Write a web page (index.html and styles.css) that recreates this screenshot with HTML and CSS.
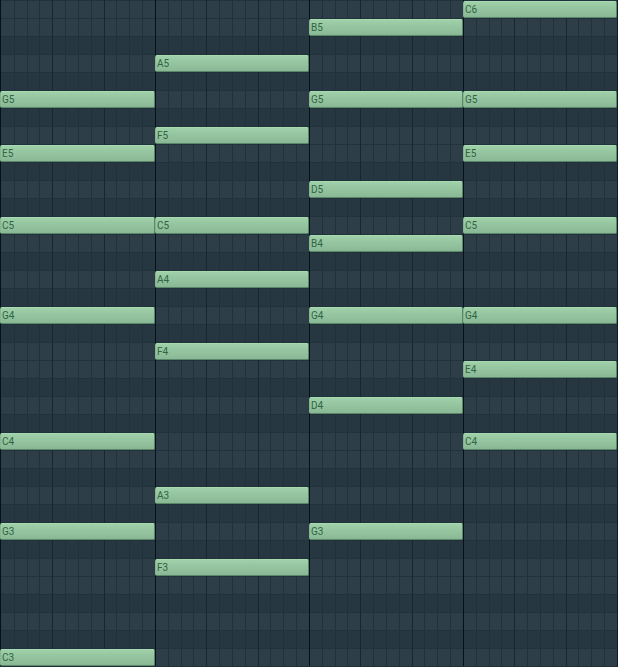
FILE: index.html
```
<!DOCTYPE html>
<html lang="en">
<head>
<meta charset="utf-8">
<title>Piano roll</title>
<link rel="stylesheet" href="styles.css">
</head>
<body>
<main class="roll" aria-label="Piano roll">
  <div class="steps" aria-hidden="true"></div>
  <div class="notes"></div>
</main>
<script src="roll.js"></script>
</body>
</html>
```
FILE: styles.css
```
body {
  margin: 0;
  background: #0e1c26;
  font-family: Roboto, "Liberation Sans", sans-serif;
}

.roll {
  --row: 18px;
  --white: #2e3e48;
  --black: #273741;
  display: grid;
  padding: 0 1px;
  /* One octave of key lanes, from C down to C sharp */
  background:
    repeating-linear-gradient(#22323c 0 1px, transparent 1px var(--row)),
    repeating-linear-gradient(
      var(--white) 0 36px,
      var(--black) 36px 54px,
      var(--white) 54px 72px,
      var(--black) 72px 90px,
      var(--white) 90px 108px,
      var(--black) 108px 126px,
      var(--white) 126px 162px,
      var(--black) 162px 180px,
      var(--white) 180px 198px,
      var(--black) 198px 216px);
  background-clip: content-box;
  border-bottom: 1px solid #20303a;
}

.steps,
.notes {
  grid-area: 1 / 1;
  display: grid;
  grid-template-columns: repeat(48, minmax(0, 1fr));
}

.notes {
  grid-template-rows: repeat(37, var(--row));
}

.step {
  border-left: 1px solid #21313b;
}

.step.beat {
  border-left-color: #172630;
}

.step.bar {
  border-left-color: #03111b;
}

/* The first bar starts in the left gutter */
.step.bar:first-child,
.note.opening {
  margin-left: -1px;
}

.note {
  box-sizing: border-box;
  margin-top: 1px;
  height: 17px;
  padding-left: 1px;
  border: 1px solid #5a8669;
  border-left-color: #84b491;
  border-top-color: #a6dbaf;
  border-radius: 2px;
  background: linear-gradient(#9fd0a9, #8ab895);
  color: #2f6642;
  font-size: 10px;
  line-height: 16px;
}
```
FILE: roll.js
```
const chords = [
  ["G5", "E5", "C5", "G4", "C4", "G3", "C3"],
  ["A5", "F5", "C5", "A4", "F4", "A3", "F3"],
  ["B5", "G5", "D5", "B4", "G4", "D4", "G3"],
  ["C6", "G5", "E5", "C5", "G4", "E4", "C4"]
];
const semitones = { C: 0, D: 2, E: 4, F: 5, G: 7, A: 9, B: 11 };
const stepsPerBar = 12;

const steps = document.querySelector(".steps");
for (let i = 0; i < 48; i++) {
  const step = document.createElement("div");
  step.className = "step" + (i % stepsPerBar === 0 ? " bar" : i % 4 === 0 ? " beat" : "");
  steps.append(step);
}

const notes = document.querySelector(".notes");
chords.forEach((chord, bar) => {
  for (const name of chord) {
    const row = (6 - Number(name[1])) * 12 - semitones[name[0]] + 1;
    const note = document.createElement("div");
    note.className = bar === 0 ? "note opening" : "note";
    note.textContent = name;
    note.style.gridArea = `${row} / ${bar * stepsPerBar + 1} / auto / span ${stepsPerBar}`;
    notes.append(note);
  }
});
```
